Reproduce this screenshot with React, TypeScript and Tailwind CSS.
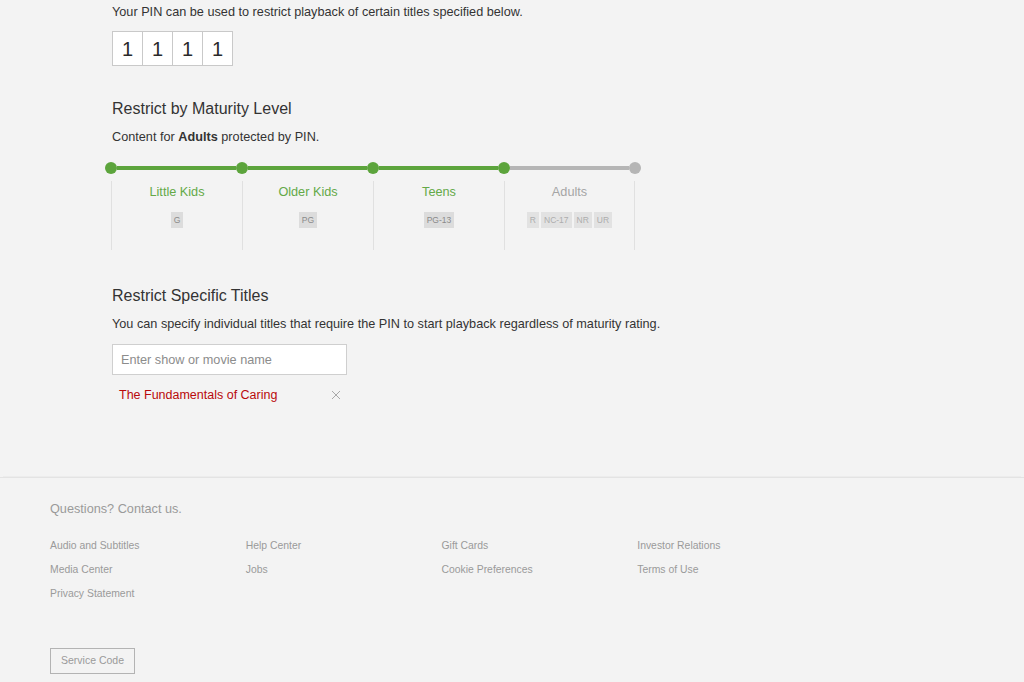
import React from "react"

const levels = [
  { name: "Little Kids", ratings: ["G"], active: true },
  { name: "Older Kids", ratings: ["PG"], active: true },
  { name: "Teens", ratings: ["PG-13"], active: true },
  { name: "Adults", ratings: ["R", "NC-17", "NR", "UR"], active: false },
]

const footerLinks = [
  "Audio and Subtitles",
  "Help Center",
  "Gift Cards",
  "Investor Relations",
  "Media Center",
  "Jobs",
  "Cookie Preferences",
  "Terms of Use",
  "Privacy Statement",
]

function Dot({ active }: { active: boolean }) {
  return (
    <div
      className={
        active
          ? "w-[12px] h-[12px] rounded-full bg-[#5ca43c] shrink-0"
          : "w-[12px] h-[12px] rounded-full bg-[#b5b5b5] shrink-0"
      }
    />
  )
}

function Line({ active }: { active: boolean }) {
  return (
    <div
      className={
        active
          ? "w-[119px] h-[4px] bg-[#5ca43c]"
          : "w-[119px] h-[4px] bg-[#b5b5b5]"
      }
    />
  )
}

export default function App() {
  return (
    <div
      className="min-h-screen bg-[#f3f3f3] text-[#333]"
      style={{ fontFamily: '"Liberation Sans", Arial, sans-serif' }}
    >
      <main className="pl-[112px] pt-[4px] h-[477px]">
        <p className="text-[12.7px] leading-[16px]">
          Your PIN can be used to restrict playback of certain titles specified below.
        </p>

        <div className="mt-[11px] flex w-fit border-l border-t border-b border-[#c9c9c9]">
          {["1", "1", "1", "1"].map((d, i) => (
            <div
              key={i}
              className="w-[30px] h-[33px] bg-white border-r border-[#c9c9c9] flex items-center justify-center text-[20px] text-[#2a2a2a]"
            >
              {d}
            </div>
          ))}
        </div>

        <h2 className="mt-[33px] text-[16px] leading-[20px]">Restrict by Maturity Level</h2>
        <p className="mt-[10px] text-[12.7px] leading-[16px]">
          Content for <b>Adults</b> protected by PIN.
        </p>

        <div className="mt-[17px] -ml-[7px] flex items-center">
          <Dot active />
          <Line active />
          <Dot active />
          <Line active />
          <Dot active />
          <Line active />
          <Dot active />
          <Line active={false} />
          <Dot active={false} />
        </div>

        <div className="mt-[7px] flex -ml-px">
          {levels.map((lv, i) => (
            <div
              key={lv.name}
              className={
                i === levels.length - 1
                  ? "w-[131px] h-[69px] border-l border-r border-[#e0e0e0] flex flex-col items-center pt-[3px]"
                  : "w-[131px] h-[69px] border-l border-[#e0e0e0] flex flex-col items-center pt-[3px]"
              }
            >
              <div
                className={
                  lv.active
                    ? "text-[12.7px] leading-[16px] text-[#64a948]"
                    : "text-[12.7px] leading-[16px] text-[#a5a5a5]"
                }
              >
                {lv.name}
              </div>
              <div className="mt-[12px] flex gap-[2px]">
                {lv.ratings.map((r) => (
                  <span
                    key={r}
                    className={
                      lv.active
                        ? "h-[16px] px-[3px] bg-[#dcdcdc] text-[8.5px] leading-[16px] text-[#8a8a8a]"
                        : "h-[16px] px-[3px] bg-[#e2e2e2] text-[8.5px] leading-[16px] text-[#adadad]"
                    }
                  >
                    {r}
                  </span>
                ))}
              </div>
            </div>
          ))}
        </div>

        <h2 className="mt-[36px] text-[16px] leading-[20px]">Restrict Specific Titles</h2>
        <p className="mt-[10px] text-[12.7px] leading-[16px]">
          You can specify individual titles that require the PIN to start playback regardless of maturity rating.
        </p>

        <input
          type="text"
          placeholder="Enter show or movie name"
          className="mt-[12px] block w-[235px] h-[31px] bg-white border border-[#cfcfcf] px-[8px] text-[12.7px] placeholder:text-[#8c8c8c] outline-none"
        />

        <div className="mt-[12px] w-[235px] flex items-center justify-between pl-[7px] pr-[6px]">
          <span className="text-[12.5px] leading-[16px] text-[#b9090b]">The Fundamentals of Caring</span>
          <svg width="10" height="10" viewBox="0 0 10 10" className="text-[#a8a8a8]">
            <path d="M1 1 L9 9 M9 1 L1 9" stroke="currentColor" strokeWidth="1" fill="none" />
          </svg>
        </div>
      </main>

      <footer className="border-t border-[#e3e3e3] shadow-[0_-4px_0_-3px_#ececec] pl-[50px] pt-[23px] pb-[9px] text-[#9a9a9a]">
        <p className="text-[12.7px] leading-[16px]">Questions? Contact us.</p>
        <div className="mt-[17px] grid grid-cols-4 w-[783px]">
          {footerLinks.map((l) => (
            <div key={l} className="text-[10.4px] leading-[24px]">
              {l}
            </div>
          ))}
        </div>
        <button className="mt-[42px] h-[26px] px-[10px] border border-[#b3b3b3] text-[10.5px] text-[#9a9a9a]">
          Service Code
        </button>
      </footer>
    </div>
  )
}
